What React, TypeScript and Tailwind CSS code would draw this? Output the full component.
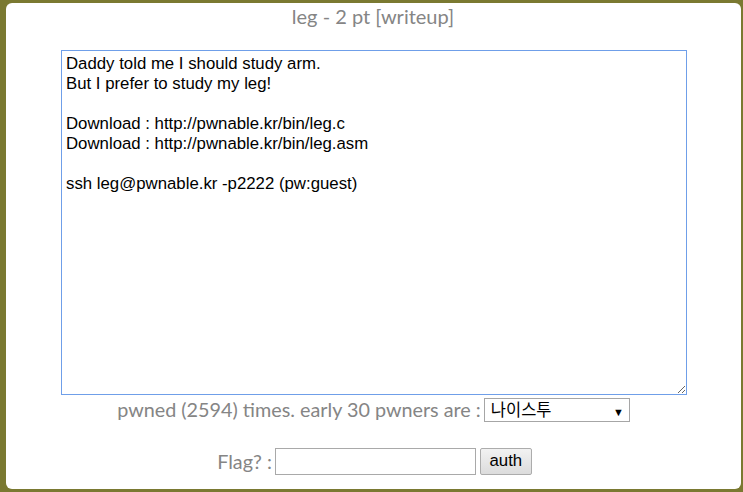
import { useState } from 'react';

const desc = `Daddy told me I should study arm.
But I prefer to study my leg!

Download : http://pwnable.kr/bin/leg.c
Download : http://pwnable.kr/bin/leg.asm

ssh leg@pwnable.kr -p2222 (pw:guest)`;

export default function App() {
  const [flag, setFlag] = useState('');

  return (
    <div className="w-[743px] h-[492px] bg-[#7a7931] pt-[3px] pl-[6px] overflow-hidden">
      <div className="w-[735px] h-[486px] bg-white rounded-[6px] flex flex-col items-center font-['Lato',sans-serif] text-[#858585]">
        {/* 제목 */}
        <h1 className="mt-[1px] ml-[-1px] text-[20px] leading-[24px] font-normal">leg - 2 pt [writeup]</h1>

        {/* 문제 설명 */}
        <textarea
          readOnly
          defaultValue={desc}
          className="mt-[22px] ml-[1px] w-[626px] h-[345px] border-[1.5px] border-[#6f9fe9] outline-none pl-[4px] pt-[3px] text-black text-[16.8px] leading-[20px] font-['Liberation_Sans',Arial,sans-serif] resize"
        />

        {/* 푼 사람 */}
        <div className="mt-[1px] flex items-center text-[19.8px] leading-[24px]">
          <span className="mr-[3px]">pwned (2594) times. early 30 pwners are :</span>
          <div className="relative">
            <select className="appearance-none w-[146px] h-[24px] border border-[#a6a6a6] bg-white pl-[6px] pt-[1px] text-black text-[16.5px] leading-[20px] font-['Liberation_Sans','Noto_Sans_CJK_KR',sans-serif] outline-none">
              <option>나이스투</option>
            </select>
            <span className="absolute right-[6px] top-[4px] text-[11px] text-black pointer-events-none">▼</span>
          </div>
        </div>

        {/* 플래그 입력 */}
        <div className="mt-[26px] ml-[2px] flex items-center text-[19.8px] leading-[24px]">
          <span className="mr-[3px]">Flag? :</span>
          <input
            value={flag}
            onChange={e => setFlag(e.target.value)}
            className="w-[201px] h-[27px] border border-[#a9a9a9] outline-none px-1 text-black"
          />
          <button className="ml-[4px] w-[52px] h-[27px] border border-[#acacac] rounded-[2px] bg-gradient-to-b from-[#f2f2f2] to-[#dcdcdc] text-black text-[16.8px] font-['Liberation_Sans',Arial,sans-serif]">
            auth
          </button>
        </div>
      </div>
    </div>
  );
}
